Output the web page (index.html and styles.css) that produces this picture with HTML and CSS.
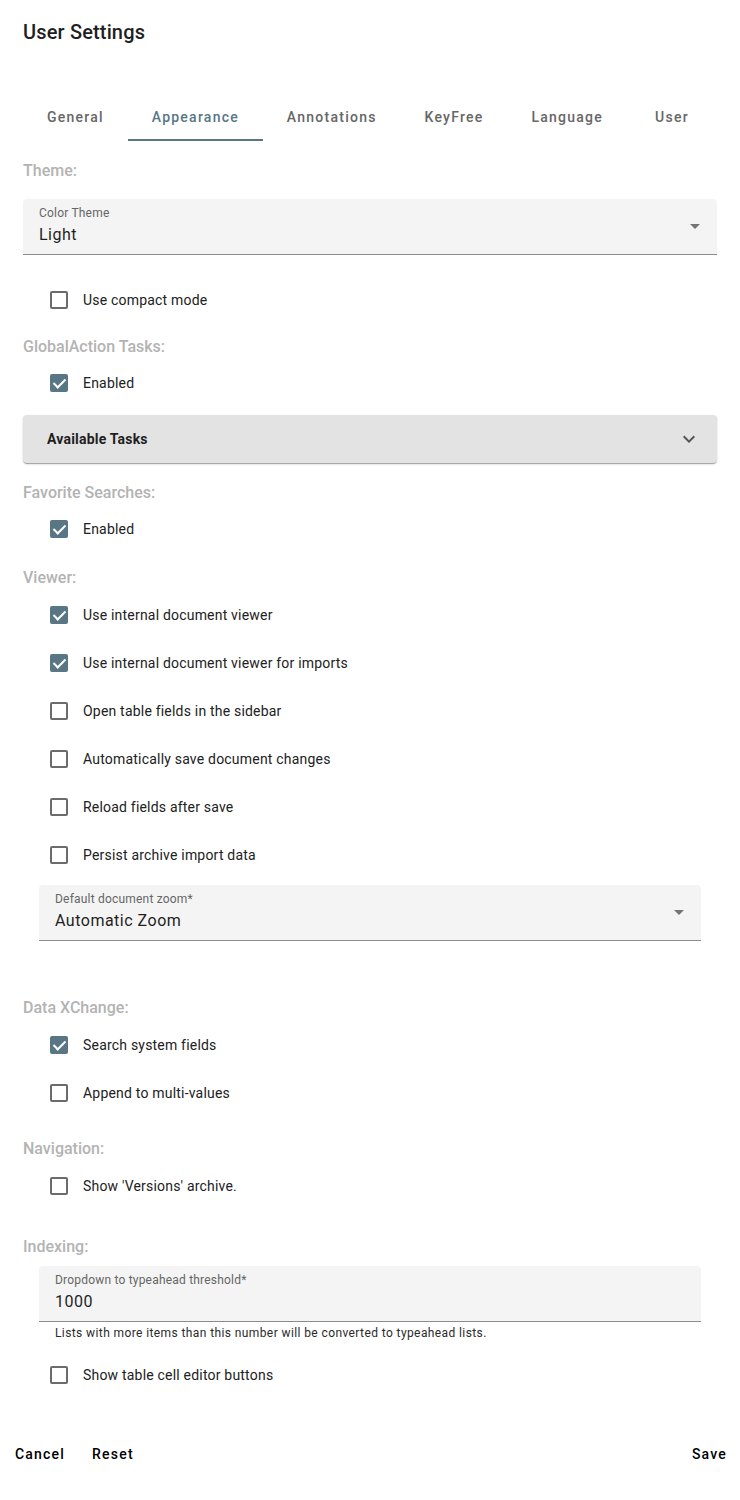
FILE: index.html
```html
<!DOCTYPE html>
<html lang="en">
<head>
<meta charset="UTF-8">
<meta name="viewport" content="width=device-width, initial-scale=1.0">
<title>User Settings</title>
<link rel="stylesheet" href="styles.css">
</head>
<body>

<div class="dialog">
    <h2 class="dialog-title">User Settings</h2>

    <!-- tabs -->
    <div class="tabs">
        <div class="tab">General</div>
        <div class="tab active">Appearance</div>
        <div class="tab">Annotations</div>
        <div class="tab">KeyFree</div>
        <div class="tab">Language</div>
        <div class="tab">User</div>
    </div>

    <div class="content">
        <div class="section-label first">Theme:</div>
        <div class="field field-theme">
            <div class="field-label">Color Theme</div>
            <div class="field-value">Light</div>
            <span class="select-arrow"></span>
        </div>

        <label class="check check-compact"><span class="box"></span>Use compact mode</label>

        <div class="section-label global-label">GlobalAction Tasks:</div>
        <label class="check"><span class="box on"></span>Enabled</label>

        <div class="panel">
            <span class="panel-title">Available Tasks</span>
            <svg class="chevron" width="12" height="8" viewBox="0 0 12 8"><path d="M1.4 0.6 6 5.2 10.6 0.6 12 2 6 8 0 2Z" fill="#555"/></svg>
        </div>

        <div class="section-label after-panel">Favorite Searches:</div>
        <label class="check"><span class="box on"></span>Enabled</label>

        <div class="section-label viewer-label">Viewer:</div>
        <label class="check"><span class="box on"></span>Use internal document viewer</label>
        <label class="check"><span class="box on"></span>Use internal document viewer for imports</label>
        <label class="check"><span class="box"></span>Open table fields in the sidebar</label>
        <label class="check"><span class="box"></span>Automatically save document changes</label>
        <label class="check"><span class="box"></span>Reload fields after save</label>
        <label class="check"><span class="box"></span>Persist archive import data</label>

        <div class="field field-inset field-zoom">
            <div class="field-label">Default document zoom*</div>
            <div class="field-value">Automatic Zoom</div>
            <span class="select-arrow"></span>
        </div>

        <div class="section-label after-field">Data XChange:</div>
        <label class="check"><span class="box on"></span>Search system fields</label>
        <label class="check"><span class="box"></span>Append to multi-values</label>

        <div class="section-label nav-label">Navigation:</div>
        <label class="check"><span class="box"></span>Show 'Versions' archive.</label>

        <div class="section-label idx-label">Indexing:</div>
        <div class="field field-inset field-threshold">
            <div class="field-label">Dropdown to typeahead threshold*</div>
            <div class="field-value">1000</div>
        </div>
        <div class="hint">Lists with more items than this number will be converted to typeahead lists.</div>
        <label class="check"><span class="box"></span>Show table cell editor buttons</label>
    </div>

    <div class="actions">
        <button class="btn">Cancel</button>
        <button class="btn">Reset</button>
        <span class="spacer"></span>
        <button class="btn">Save</button>
    </div>
</div>

</body>
</html>
```

FILE: styles.css
```css
body {
    margin: 0;
    padding: 0;
    background: #ffffff;
    font-family: Roboto, "Liberation Sans", Arial, sans-serif;
    color: #212121;
}
.dialog {
    width: 740px;
}
.dialog-title {
    margin: 0;
    padding: 20px 23px 0;
    font-size: 20px;
    line-height: 24px;
    font-weight: 500;
    letter-spacing: 0.15px;
    color: #1f1f1f;
}
.tabs {
    display: flex;
    margin: 49px 23px 0;
    height: 48px;
}
.tab {
    min-width: 90px;
    padding: 0 24px;
    box-sizing: border-box;
    display: flex;
    align-items: center;
    justify-content: center;
    font-size: 14px;
    font-weight: 500;
    letter-spacing: 1.25px;
    color: #666666;
}
.tab.active {
    color: #587684;
    border-bottom: 2px solid #587684;
    padding-top: 2px;
}
.content {
    padding: 0 23px;
}
.section-label {
    font-size: 16px;
    line-height: 24px;
    font-weight: 500;
    color: #b3b3b3;
    margin-top: 10px;
}
.section-label.first {
    margin-top: 18px;
}
.section-label.global-label {
    margin-top: 11px;
}
.section-label.after-panel {
    margin-top: 18px;
}
.section-label.viewer-label {
    margin-top: 13px;
    margin-bottom: 1px;
}
.section-label.after-field {
    margin-top: 55px;
    margin-bottom: 1px;
}
.section-label.nav-label {
    margin-top: 20px;
    margin-bottom: 1px;
}
.section-label.idx-label {
    margin-top: 25px;
}
/* form fields */
.field {
    position: relative;
    height: 55px;
    background: #f4f4f4;
    border-bottom: 1px solid #8c8c8c;
    border-radius: 4px 4px 0 0;
    padding: 0 16px;
}
.field-theme {
    margin-top: 16px;
}
.field-inset {
    margin-left: 16px;
    margin-right: 16px;
}
.field-zoom {
    margin-top: 6px;
}
.field-threshold {
    margin-top: 7px;
}
.field-label {
    padding-top: 7px;
    font-size: 12px;
    line-height: 15px;
    color: #666666;
    letter-spacing: 0.2px;
}
.field-value {
    margin-top: 3px;
    font-size: 16px;
    line-height: 22px;
    color: #1f1f1f;
    letter-spacing: 0.5px;
}
.select-arrow {
    position: absolute;
    right: 17px;
    top: 25px;
    width: 0;
    height: 0;
    border-left: 5px solid transparent;
    border-right: 5px solid transparent;
    border-top: 5px solid #757575;
}
.hint {
    margin: 4px 16px 11px;
    padding: 0 16px;
    font-size: 12px;
    line-height: 14px;
    color: #2a2a2a;
    letter-spacing: 0.4px;
}
/* checkboxes */
.check {
    display: flex;
    align-items: center;
    height: 48px;
    padding-left: 27px;
    font-size: 14px;
    color: #212121;
    letter-spacing: 0.2px;
}
.check-compact {
    margin-top: 21px;
}
.box {
    width: 18px;
    height: 18px;
    box-sizing: border-box;
    border: 2px solid #6b6b6b;
    border-radius: 2px;
    margin-right: 15px;
    flex-shrink: 0;
    position: relative;
}
.box.on {
    background: #587684;
    border-color: #587684;
}
.box.on::after {
    content: "";
    position: absolute;
    left: 4px;
    top: 0px;
    width: 5px;
    height: 10px;
    border-right: 2px solid #ffffff;
    border-bottom: 2px solid #ffffff;
    transform: rotate(45deg);
}
/* expansion panel */
.panel {
    margin-top: 8px;
    height: 48px;
    display: flex;
    align-items: center;
    justify-content: space-between;
    padding: 0 24px;
    background: #e3e3e3;
    border-radius: 4px;
    box-shadow: 0 2px 1px -1px rgba(0,0,0,.2), 0 1px 1px 0 rgba(0,0,0,.14), 0 1px 3px 0 rgba(0,0,0,.12);
}
.panel-title {
    font-size: 14px;
    font-weight: 700;
    color: #1f1f1f;
    letter-spacing: 0.2px;
}
.chevron {
    margin-right: -2px;
}
/* actions */
.actions {
    display: flex;
    align-items: center;
    margin-top: 37px;
    padding: 0 5px 0 7px;
}
.spacer {
    flex: 1;
}
.btn {
    background: none;
    border: none;
    padding: 0 8px;
    height: 36px;
    font-family: Roboto, "Liberation Sans", Arial, sans-serif;
    font-size: 14px;
    font-weight: 500;
    letter-spacing: 1.2px;
    color: #000000;
    cursor: pointer;
    margin-right: 11px;
}
.btn:last-child {
    margin-right: 0;
}
```
